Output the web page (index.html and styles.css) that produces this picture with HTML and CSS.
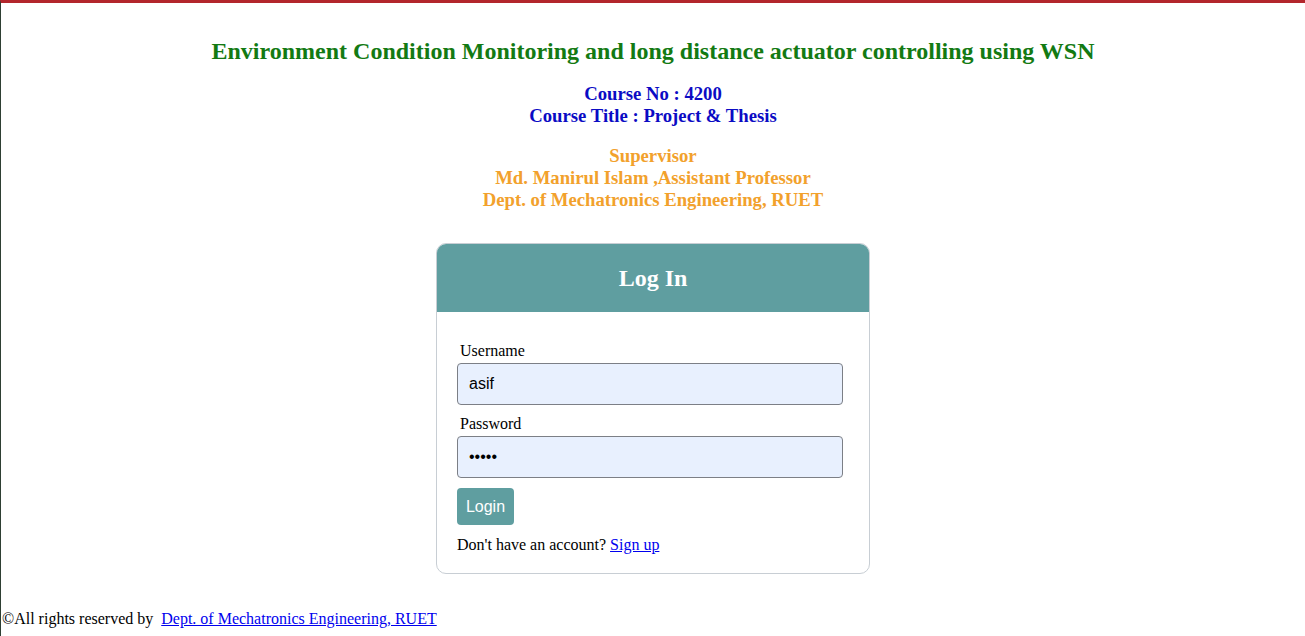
FILE: index.html
```html
<!DOCTYPE html>
<html lang="en">
<head>
<meta charset="utf-8">
<title>Log In</title>
<link rel="stylesheet" href="styles.css">
</head>
<body>
<main class="page">
  <h1 class="title">Environment Condition Monitoring and long distance actuator controlling using WSN</h1>
  <p class="course">Course No : 4200<br>Course Title : Project &amp; Thesis</p>
  <p class="supervisor">Supervisor<br>Md. Manirul Islam ,Assistant Professor<br>Dept. of Mechatronics Engineering, RUET</p>

  <section class="card">
    <header class="card-head">Log In</header>
    <form class="card-body">
      <label class="label" for="u">Username</label>
      <input class="field" id="u" type="text" value="asif">
      <label class="label" for="p">Password</label>
      <input class="field" id="p" type="password" value="asif1">
      <button class="btn" type="button">Login</button>
      <p class="signup">Don't have an account? <a href="#">Sign up</a></p>
    </form>
  </section>
</main>
<footer class="footer">©All rights reserved by &nbsp;<a href="#">Dept. of Mechatronics Engineering, RUET</a></footer>
</body>
</html>
```

FILE: styles.css
```css
html, body {
  margin: 0;
  padding: 0;
}
body {
  font-family: "Liberation Serif", "Times New Roman", serif;
  font-size: 16px;
  color: #000;
  background: #fff;
  border-top: 3px solid #b3262c;
  border-left: 1px solid #2e3f33;
  min-height: 636px;
  box-sizing: border-box;
  display: flex;
  flex-direction: column;
}
.page {
  display: flex;
  flex-direction: column;
  align-items: center;
}
.title {
  margin: 34px 0 0;
  font-size: 24px;
  font-weight: bold;
  color: #137a13;
  text-align: center;
  line-height: 28px;
}
.course {
  margin: 18px 0 0;
  font-size: 18.72px;
  line-height: 22px;
  font-weight: bold;
  color: #0b0bc4;
  text-align: center;
}
.supervisor {
  margin: 18px 0 0;
  font-size: 18.72px;
  line-height: 22px;
  font-weight: bold;
  color: #f2a12c;
  text-align: center;
}
.card {
  margin-top: 32px;
  width: 434px;
  box-sizing: border-box;
  border: 1px solid #c8ced4;
  border-radius: 10px;
  overflow: hidden;
}
.card-head {
  background: #5f9ea0;
  color: #fff;
  font-size: 24px;
  font-weight: bold;
  text-align: center;
  height: 68px;
  line-height: 68px;
}
.card-body {
  display: flex;
  flex-direction: column;
  align-items: flex-start;
  padding: 30px 26px 19px 20px;
}
.label {
  padding-left: 3px;
  line-height: 18px;
  margin-bottom: 3px;
}
.field {
  width: 386px;
  height: 42px;
  box-sizing: border-box;
  background: #e8f0fe;
  border: 1px solid #7c7f86;
  border-radius: 4px;
  padding: 0 11px;
  font-family: "Liberation Sans", Arial, sans-serif;
  font-size: 16px;
  color: #000;
  margin: 0 0 10px;
}
.btn {
  width: 57px;
  height: 37px;
  background: #5f9ea0;
  color: #fff;
  border: none;
  border-radius: 4px;
  font-family: "Liberation Sans", Arial, sans-serif;
  font-size: 16px;
  padding: 0;
}
.signup {
  margin: 11px 0 0;
  line-height: 18px;
}
.signup a, .footer a {
  color: #0000ee;
}
.footer {
  margin-top: auto;
  padding: 0 0 8px 1px;
  line-height: 18px;
}
```
